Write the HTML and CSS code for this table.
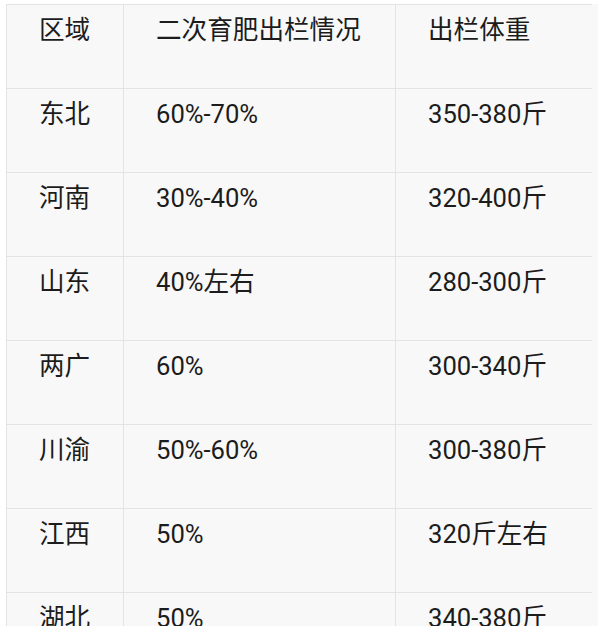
FILE: index.html
```html
<!DOCTYPE html>
<html lang="zh">
<head>
<meta charset="utf-8">
<link rel="stylesheet" href="styles.css">
</head>
<body>
<div class="page">
  <div class="grid">
    <div class="cell">区域</div><div class="cell">二次育肥出栏情况</div><div class="cell">出栏体重</div>
    <div class="cell">东北</div><div class="cell">60%-70%</div><div class="cell">350-380斤</div>
    <div class="cell">河南</div><div class="cell">30%-40%</div><div class="cell">320-400斤</div>
    <div class="cell">山东</div><div class="cell">40%左右</div><div class="cell">280-300斤</div>
    <div class="cell">两广</div><div class="cell">60%</div><div class="cell">300-340斤</div>
    <div class="cell">川渝</div><div class="cell">50%-60%</div><div class="cell">300-380斤</div>
    <div class="cell">江西</div><div class="cell">50%</div><div class="cell">320斤左右</div>
    <div class="cell">湖北</div><div class="cell">50%</div><div class="cell">340-380斤</div>
  </div>
</div>
</body>
</html>
```
FILE: styles.css
```css
html, body {
  margin: 0;
  padding: 0;
  background: #ffffff;
  overflow: hidden;
}
.page {
  width: 598px;
  height: 626px;
  overflow: hidden;
  padding: 4px 0 0 6px;
  box-sizing: border-box;
}
.grid {
  display: grid;
  grid-template-columns: 117px 272px 197px;
  background: #f8f8f8;
}
.cell {
  box-sizing: border-box;
  height: 84px;
  border-left: 1px solid #e3e3e3;
  border-top: 1px solid #e3e3e3;
  padding: 7px 0 0 32px;
  font-family: Roboto, "Noto Sans CJK SC", sans-serif;
  font-size: 25.6px;
  line-height: 36px;
  color: #1c1c1c;
  white-space: nowrap;
}
```
